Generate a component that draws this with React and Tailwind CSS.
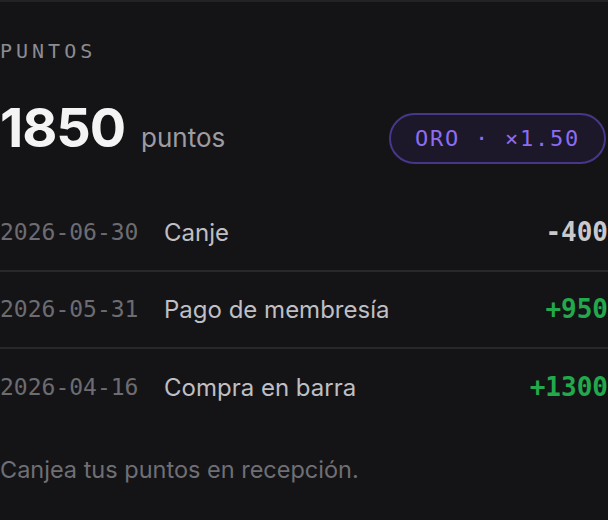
import React from "react";

const rows = [
  { date: "2026-06-30", label: "Canje", amount: "-400", positive: false },
  { date: "2026-05-31", label: "Pago de membresía", amount: "+950", positive: true },
  { date: "2026-04-16", label: "Compra en barra", amount: "+1300", positive: true },
];

const mono = "font-['DejaVu_Sans_Mono',monospace]";

function App() {
  return (
    <div className="w-[608px] h-[520px] overflow-hidden bg-[#141416] border-t-2 border-[#232326] font-['Inter',sans-serif]">
      {/* Label */}
      <div className={`${mono} mt-[38px] text-[20px] leading-[22px] tracking-[0.2em] text-[#8c8c92]`}>
        PUNTOS
      </div>

      {/* Balance + tier */}
      <div className="flex items-start justify-between mt-[36px]">
        <div className="flex items-baseline gap-[16px]">
          <span className="text-[54px] leading-[60px] font-bold tracking-[-0.02em] text-[#f4f4f5]">1850</span>
          <span className="text-[26px] text-[#9c9ca2]">puntos</span>
        </div>
        <div
          className={`${mono} mt-[15px] mr-[2px] h-[51px] px-[24px] flex items-center rounded-full border-2 border-[#47378a] bg-[#1c1829] text-[22px] text-[#8d6cf0] tracking-[0.08em]`}
        >
          ORO · ×1.50
        </div>
      </div>

      {/* History */}
      <div className="mt-[31px]">
        {rows.map((r, i) => (
          <div
            key={r.date}
            className={`flex items-center h-[77px] ${i < rows.length - 1 ? "border-b-2 border-[#28282b]" : ""}`}
          >
            <span className={`${mono} text-[23px] text-[#6c6c72] w-[164px]`}>{r.date}</span>
            <span className="text-[24px] text-[#bfbfc4] flex-1">{r.label}</span>
            <span
              className={`${mono} text-[26px] font-bold ${r.positive ? "text-[#22a94c]" : "text-[#c9c9cd]"}`}
            >
              {r.amount}
            </span>
          </div>
        ))}
      </div>

      {/* Footer note */}
      <p className="mt-[26px] text-[23.5px] text-[#6f6f75]">Canjea tus puntos en recepción.</p>
    </div>
  );
}

export default App;
